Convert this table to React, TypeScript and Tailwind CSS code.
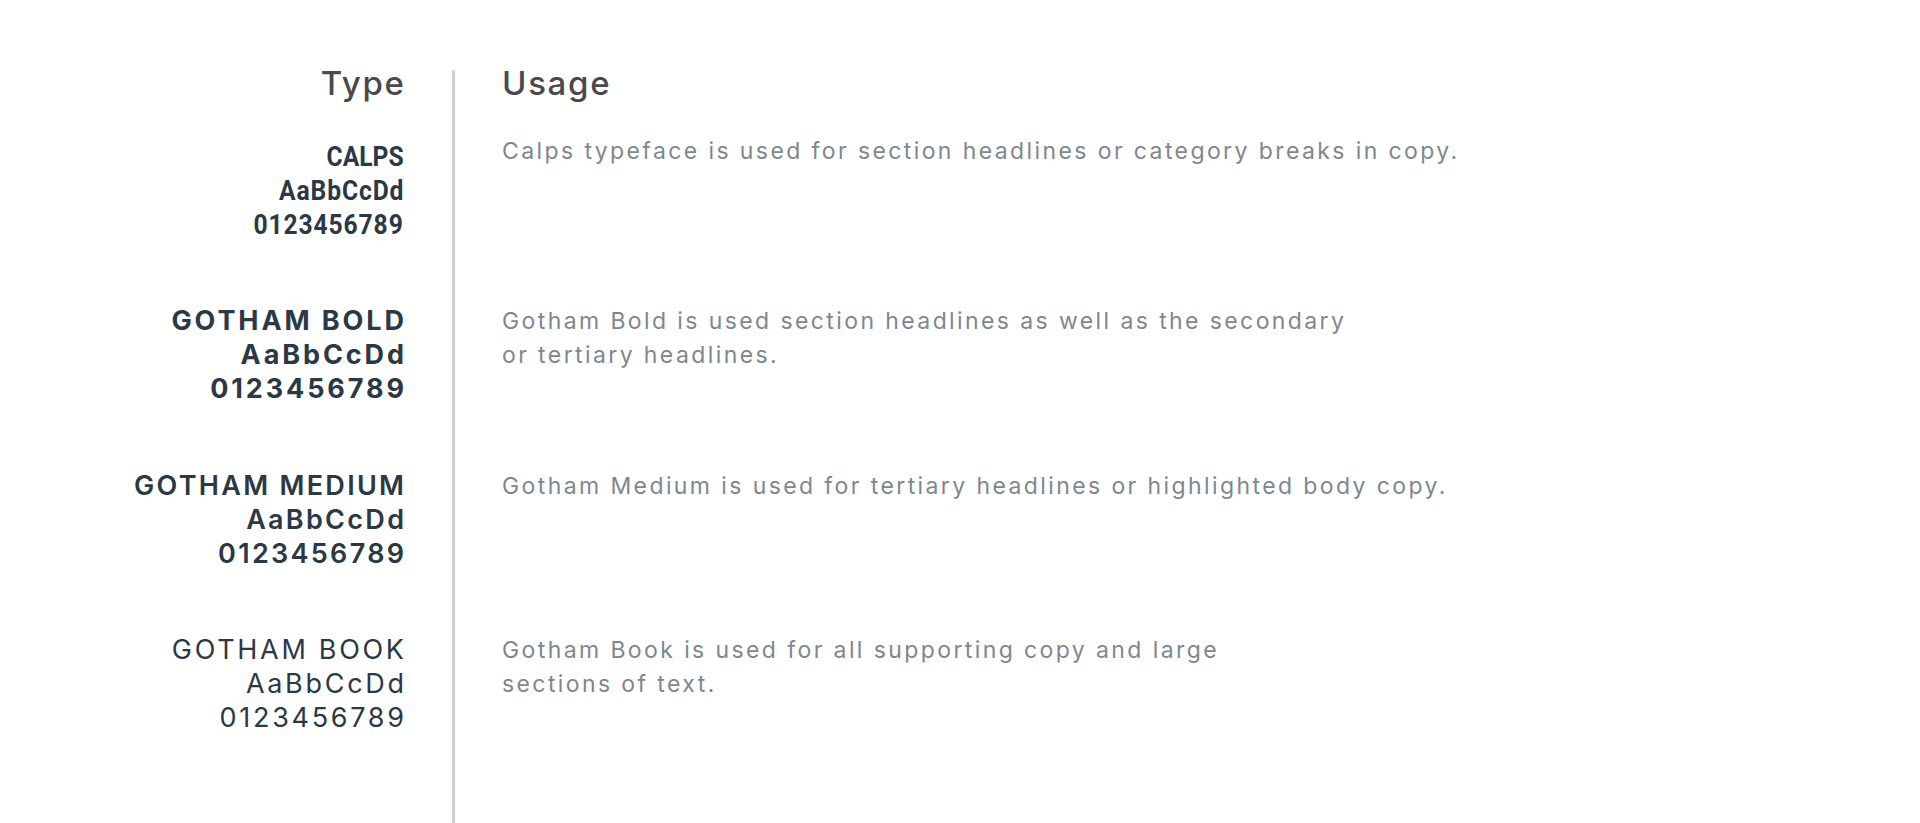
import React from "react";

type Row = {
  key: string;
  lines: { text: string; cls?: string }[];
  cls: string;
  calps: boolean;
  usage: string[];
  usageCls: string;
};

const rows: Row[] = [
  {
    key: "calps",
    lines: [
      { text: "CALPS", cls: "tracking-[0px]" },
      { text: "AaBbCcDd", cls: "tracking-[1px]" },
      { text: "0123456789", cls: "tracking-[1px]" },
    ],
    cls: "font-['Roboto',sans-serif] font-bold text-[28px]",
    calps: true,
    usage: ["Calps typeface is used for section headlines or category breaks in copy."],
    usageCls: "-mt-[6px]",
  },
  {
    key: "bold",
    lines: [{ text: "GOTHAM BOLD" }, { text: "AaBbCcDd" }, { text: "0123456789" }],
    cls: "font-bold text-[27px] tracking-[2.9px] -mr-[2.9px]",
    calps: false,
    usage: [
      "Gotham Bold is used section headlines as well as the secondary",
      "or tertiary headlines.",
    ],
    usageCls: "",
  },
  {
    key: "medium",
    lines: [{ text: "GOTHAM MEDIUM" }, { text: "AaBbCcDd" }, { text: "0123456789" }],
    cls: "font-semibold text-[27px] tracking-[2.3px] -mr-[2.3px] pt-[1px]",
    calps: false,
    usage: ["Gotham Medium is used for tertiary headlines or highlighted body copy."],
    usageCls: "pt-[1px]",
  },
  {
    key: "book",
    lines: [{ text: "GOTHAM BOOK" }, { text: "AaBbCcDd" }, { text: "0123456789" }],
    cls: "font-normal text-[27px] tracking-[2.7px] -mr-[2.7px] pt-[1px]",
    calps: false,
    usage: ["Gotham Book is used for all supporting copy and large", "sections of text."],
    usageCls: "pt-[1px]",
  },
];

export default function App() {
  return (
    <div className="h-screen w-full bg-white font-['Inter',sans-serif] overflow-hidden">
      <div className="flex h-full pt-[70px]">
        <div className="w-[452px] pr-[48px] text-right shrink-0">
          <div className="h-[70px] text-[33px] leading-[26px] font-medium text-[#4a4a4a] tracking-[1.7px] -mr-[1.7px]">
            Type
          </div>
          {rows.map((r) => (
            <div key={r.key} className={`h-[164px] leading-[34px] text-[#2b3846] ${r.cls}`}>
              {r.lines.map((l) =>
                r.calps ? (
                  <div key={l.text}>
                    <span className={`inline-block origin-right scale-x-[0.88] ${l.cls ?? ""}`}>
                      {l.text}
                    </span>
                  </div>
                ) : (
                  <div key={l.text}>{l.text}</div>
                )
              )}
            </div>
          ))}
        </div>
        <div className="flex-1 border-l-[3px] border-[#d0d0d0] pl-[47px]">
          <div className="h-[70px] text-[33px] leading-[26px] font-medium text-[#4a4a4a] tracking-[1.7px]">
            Usage
          </div>
          {rows.map((r) => (
            <div
              key={r.key}
              className="h-[164px] flex flex-col text-[23px] leading-[34px] text-[#7e878f] tracking-[2.4px]"
            >
              <div className={r.usageCls}>
                {r.usage.map((u) => (
                  <div key={u}>{u}</div>
                ))}
              </div>
            </div>
          ))}
        </div>
      </div>
    </div>
  );
}
